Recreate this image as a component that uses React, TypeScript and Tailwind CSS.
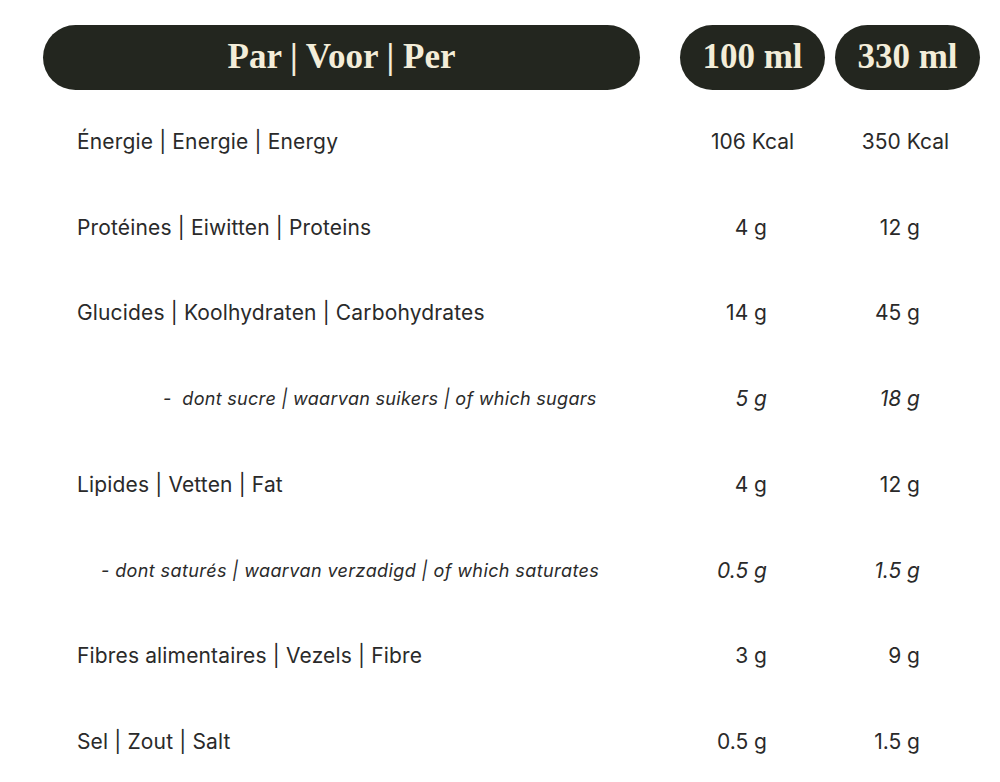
import React from "react";

const rows: { label: string; a: string; b: string; sub?: "one" | "two"; center?: boolean }[] = [
  { label: "Énergie | Energie | Energy", a: "106 Kcal", b: "350 Kcal", center: true },
  { label: "Protéines | Eiwitten | Proteins", a: "4 g", b: "12 g" },
  { label: "Glucides | Koolhydraten | Carbohydrates", a: "14 g", b: "45 g" },
  { label: "-  dont sucre | waarvan suikers | of which sugars", a: "5 g", b: "18 g", sub: "one" },
  { label: "Lipides | Vetten | Fat", a: "4 g", b: "12 g" },
  { label: "- dont saturés | waarvan verzadigd | of which saturates", a: "0.5 g", b: "1.5 g", sub: "two" },
  { label: "Fibres alimentaires | Vezels | Fibre", a: "3 g", b: "9 g" },
  { label: "Sel | Zout | Salt", a: "0.5 g", b: "1.5 g" },
];

const pill =
  "h-[65px] rounded-full bg-[#23261f] flex items-center justify-center text-[#f3edd9] font-bold text-[35px] font-['Liberation_Serif',serif]";

export default function App() {
  return (
    <div className="w-[1000px] h-[782px] bg-white overflow-hidden">
      <div className="pl-[43px] pt-[25px] flex">
        <div className={pill + " w-[597px]"}>Par | Voor | Per</div>
        <div className={pill + " w-[145px] ml-[40px]"}>100 ml</div>
        <div className={pill + " w-[145px] ml-[10px]"}>330 ml</div>
      </div>
      <div className="pl-[43px] pt-[9px] font-['Inter',sans-serif] text-[#2a2a2a]">
        {rows.map((r, i) => (
          <div key={i} className="flex h-[85.7px] items-center">
            <div
              className={
                "w-[637px] whitespace-pre " +
                (r.sub === "one"
                  ? "pl-[120px] italic text-[18px] tracking-[0.3px]"
                  : r.sub === "two"
                  ? "pl-[58px] italic text-[18px] tracking-[0.4px]"
                  : "pl-[34px] text-[21px] tracking-[0.15px]")
              }
            >
              {r.label}
            </div>
            <div
              className={
                "w-[145px] text-[21px] " +
                (r.center ? "text-center " : "text-right pr-[58px] ") +
                (r.sub ? "italic" : "")
              }
            >
              {r.a}
            </div>
            <div
              className={
                "w-[145px] ml-[10px] text-[21px] " +
                (r.center ? "text-center pr-[4px] " : "text-right pr-[60px] ") +
                (r.sub ? "italic" : "")
              }
            >
              {r.b}
            </div>
          </div>
        ))}
      </div>
    </div>
  );
}
